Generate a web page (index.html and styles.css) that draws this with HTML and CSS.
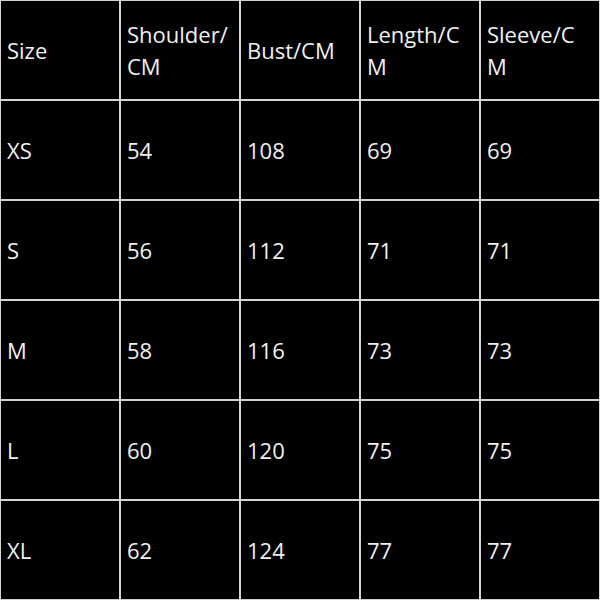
FILE: index.html
```html
<!DOCTYPE html>
<html>
<head>
<meta charset="utf-8">
<link rel="stylesheet" href="styles.css">
</head>
<body>
<div class="grid">
  <div class="cell">Size</div>
  <div class="cell">Shoulder/<br>CM</div>
  <div class="cell">Bust/CM</div>
  <div class="cell">Length/C<br>M</div>
  <div class="cell">Sleeve/C<br>M</div>

  <div class="cell">XS</div>
  <div class="cell">54</div>
  <div class="cell">108</div>
  <div class="cell">69</div>
  <div class="cell">69</div>

  <div class="cell">S</div>
  <div class="cell">56</div>
  <div class="cell">112</div>
  <div class="cell">71</div>
  <div class="cell">71</div>

  <div class="cell">M</div>
  <div class="cell">58</div>
  <div class="cell">116</div>
  <div class="cell">73</div>
  <div class="cell">73</div>

  <div class="cell">L</div>
  <div class="cell">60</div>
  <div class="cell">120</div>
  <div class="cell">75</div>
  <div class="cell">75</div>

  <div class="cell">XL</div>
  <div class="cell">62</div>
  <div class="cell">124</div>
  <div class="cell">77</div>
  <div class="cell">77</div>
</div>
</body>
</html>
```
FILE: styles.css
```css
html, body {
  margin: 0;
  padding: 0;
  background: #000;
}
.grid {
  width: 600px;
  height: 600px;
  box-sizing: border-box;
  padding: 1px;
  gap: 2px;
  background: #d4d4d4;
  display: grid;
  grid-template-columns: repeat(5, 1fr);
  grid-template-rows: repeat(6, 1fr);
}
.cell {
  background: #000;
  color: #f0f0f0;
  font-family: "Open Sans", sans-serif;
  font-size: 22px;
  line-height: 32px;
  display: flex;
  align-items: center;
  padding-left: 6px;
}
```
